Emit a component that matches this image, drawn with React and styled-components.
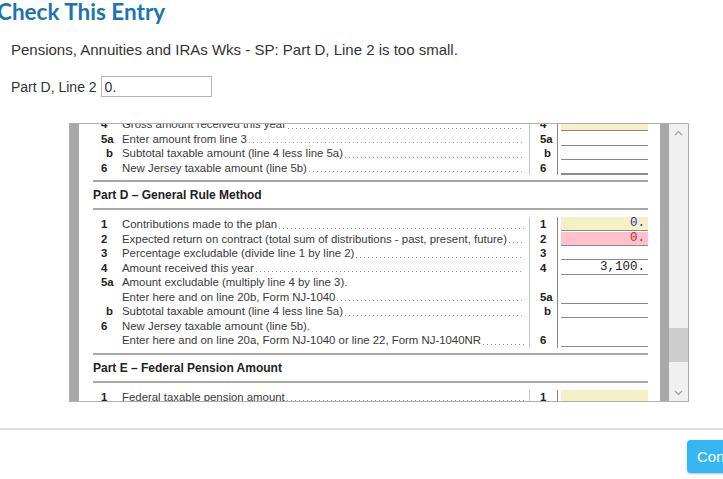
import React from "react";
import styled, { createGlobalStyle } from "styled-components";

const Global = createGlobalStyle`
  body {
    margin: 0;
    background: #fff;
    font-family: "Liberation Sans", Arial, sans-serif;
    color: #333;
  }
`;

const partC = [
  { num: "4", text: "Gross amount received this year", mid: "4", fill: "yellow" },
  { num: "5a", text: "Enter amount from line 3", mid: "5a" },
  { num: "b", sub: true, text: "Subtotal taxable amount (line 4 less line 5a)", mid: "b" },
  { num: "6", text: "New Jersey taxable amount (line 5b)", mid: "6", total: true },
];

const partD = [
  { num: "1", text: "Contributions made to the plan", mid: "1", fill: "yellow", value: "0.", tone: "blue" },
  {
    num: "2",
    text: "Expected return on contract (total sum of distributions - past, present, future)",
    mid: "2",
    fill: "pink",
    value: "0.",
    tone: "red",
  },
  { num: "3", text: "Percentage excludable (divide line 1 by line 2)", mid: "3" },
  { num: "4", text: "Amount received this year", mid: "4", value: "3,100." },
  { num: "5a", text: "Amount excludable (multiply line 4 by line 3).", noDots: true, noField: true },
  { text: "Enter here and on line 20b, Form NJ-1040", mid: "5a" },
  { num: "b", sub: true, text: "Subtotal taxable amount (line 4 less line 5a)", mid: "b" },
  { num: "6", text: "New Jersey taxable amount (line 5b).", noDots: true, noField: true },
  { text: "Enter here and on line 20a, Form NJ-1040 or line 22, Form NJ-1040NR", mid: "6" },
];

const partE = [{ num: "1", text: "Federal taxable pension amount", mid: "1", fill: "yellow" }];

export default function App() {
  return (
    <Page>
      <Global />
      <Dialog>
        <Title>Check This Entry</Title>
        <Message>Pensions, Annuities and IRAs Wks - SP: Part D, Line 2 is too small.</Message>
        <FieldRow>
          <Label>Part D, Line 2</Label>
          <Input defaultValue="0." />
        </FieldRow>
        <Frame>
          <Stripe />
          <Viewport>
            <Sheet>
              <Rows $first>
                {partC.map((r, i) => (
                  <FormRow key={i} row={r} />
                ))}
              </Rows>
              <Heading>Part D – General Rule Method</Heading>
              <Rows>
                {partD.map((r, i) => (
                  <FormRow key={i} row={r} />
                ))}
              </Rows>
              <Heading>Part E – Federal Pension Amount</Heading>
              <Rows>
                {partE.map((r, i) => (
                  <FormRow key={i} row={r} />
                ))}
              </Rows>
            </Sheet>
          </Viewport>
          <Stripe />
          <Scrollbar>
            <ArrowBox>
              <svg width="9" height="6" viewBox="0 0 9 6">
                <polyline points="1,5 4.5,1.5 8,5" fill="none" stroke="#a0a0a0" strokeWidth="1.2" />
              </svg>
            </ArrowBox>
            <Track>
              <Thumb $offset={187} />
            </Track>
            <ArrowBox>
              <svg width="9" height="6" viewBox="0 0 9 6">
                <polyline points="1,1 4.5,4.5 8,1" fill="none" stroke="#a0a0a0" strokeWidth="1.2" />
              </svg>
            </ArrowBox>
          </Scrollbar>
        </Frame>
      </Dialog>
      <Divider />
      <Footer>
        <ContinueButton>Continue</ContinueButton>
      </Footer>
    </Page>
  );
}

function FormRow({ row }) {
  return (
    <Row>
      <Num $sub={row.sub}>{row.num}</Num>
      <Desc>
        <span>{row.text}</span>
        {!row.noDots && <Dots />}
      </Desc>
      <MidNum $sub={row.sub}>{row.mid}</MidNum>
      <AmountCell>
        {!row.noField && (
          <Amount $fill={row.fill} $tone={row.tone} $total={row.total}>
            {row.value}
          </Amount>
        )}
      </AmountCell>
    </Row>
  );
}

const Page = styled.div`
  width: 723px;
  height: 479px;
  overflow: hidden;
`;

const Dialog = styled.div`
  padding-left: 11px;
`;

const Title = styled.h1`
  margin: 0 0 0 -14px;
  font-family: Lato, "Open Sans", sans-serif;
  font-weight: 700;
  font-size: 22.5px;
  line-height: 24px;
  color: #1c74b0;
`;

const Message = styled.p`
  margin: 17px 0 0;
  font-size: 15px;
  line-height: 18px;
  color: #333;
`;

const FieldRow = styled.div`
  display: flex;
  align-items: center;
  gap: 4px;
  margin-top: 17px;
  height: 21px;
`;

const Label = styled.span`
  font-size: 14px;
  color: #333;
`;

const Input = styled.input`
  box-sizing: border-box;
  width: 111px;
  height: 21px;
  border: 1px solid #b5b5b5;
  padding: 0 3px;
  font-family: "Liberation Sans", Arial, sans-serif;
  font-size: 14px;
  color: #333;
  outline: none;
`;

const Frame = styled.div`
  display: flex;
  box-sizing: border-box;
  width: 620px;
  height: 279px;
  margin: 26px 0 0 58px;
  border: 1px solid #b0b0b0;
`;

const Stripe = styled.div`
  width: 9px;
  flex: none;
  background: #a8a8a8;
`;

const Viewport = styled.div`
  flex: 1;
  overflow: hidden;
  background: #fff;
`;

const Sheet = styled.div`
  padding: 0 12px 0 14px;
  font-size: 11.4px;
  color: #3a3a3a;
`;

const Rows = styled.div`
  padding: 7px 0 5px;
  margin-top: ${(p) => (p.$first ? "-14px" : "0")};
`;

const Heading = styled.div`
  height: 26px;
  line-height: 26px;
  border-top: 2px solid #a8a8a8;
  border-bottom: 2px solid #a8a8a8;
  font-size: 12px;
  font-weight: 700;
  color: #222;
`;

const Row = styled.div`
  display: grid;
  grid-template-columns: 29px 1fr 29px 90px;
  height: 14.5px;
  line-height: 14.5px;
  white-space: nowrap;
`;

const Num = styled.span`
  box-sizing: border-box;
  font-weight: 700;
  color: #222;
  text-align: ${(p) => (p.$sub ? "right" : "left")};
  padding: ${(p) => (p.$sub ? "0 9px 0 0" : "0 0 0 8px")};
`;

const Desc = styled.span`
  display: flex;
  min-width: 0;
  overflow: hidden;
  padding-right: 5px;
`;

const Dots = styled.span`
  flex: 1;
  margin-left: 2px;
  background-image: linear-gradient(to right, #9a9a9a 1px, transparent 1px);
  background-size: 4px 1px;
  background-repeat: repeat-x;
  background-position: left bottom 3px;
`;

const MidNum = styled.span`
  box-sizing: border-box;
  border-left: 1px solid #c4c4c4;
  border-right: 1px solid #888;
  font-weight: 700;
  color: #222;
  text-align: ${(p) => (p.$sub ? "right" : "left")};
  padding: ${(p) => (p.$sub ? "0 6px 0 0" : "0 0 0 10px")};
`;

const AmountCell = styled.span`
  padding-left: 3px;
`;

const fills = { yellow: "#f6f0c6", pink: "#ffc2cc" };
const tones = { blue: "#2a2ab4", red: "#d81b2a" };

const Amount = styled.div`
  box-sizing: border-box;
  height: 14px;
  line-height: 13px;
  padding-right: 3px;
  text-align: right;
  background: ${(p) => fills[p.$fill] || "transparent"};
  border-bottom: ${(p) => (p.$total ? "2px" : "1px")} solid #8a8a8a;
  font-family: "Liberation Mono", "Courier New", monospace;
  font-size: 12.5px;
  color: ${(p) => tones[p.$tone] || "#222"};
`;

const Scrollbar = styled.div`
  width: 19px;
  flex: none;
  display: flex;
  flex-direction: column;
  background: #f0f0f0;
`;

const ArrowBox = styled.div`
  height: 17px;
  display: flex;
  align-items: center;
  justify-content: center;
`;

const Track = styled.div`
  flex: 1;
`;

const Thumb = styled.div`
  height: 34px;
  margin-top: ${(p) => p.$offset}px;
  background: #cdcdcd;
`;

const Divider = styled.div`
  height: 2px;
  margin-top: 26px;
  background: #dedede;
`;

const Footer = styled.div`
  display: flex;
  padding: 10px 0 0 687px;
`;

const ContinueButton = styled.button`
  flex: none;
  height: 33px;
  padding: 0 10px;
  border: none;
  border-radius: 4px;
  background: #34b6f2;
  color: #fff;
  font-family: "Liberation Sans Narrow", "Liberation Sans", Arial, sans-serif;
  font-size: 15px;
  box-shadow: 0 1px 2px rgba(0, 0, 0, 0.25);
  cursor: pointer;
`;
